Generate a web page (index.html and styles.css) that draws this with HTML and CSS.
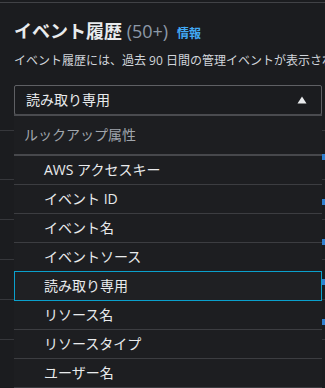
FILE: index.html
```html
<!DOCTYPE html>
<html lang="ja">
<head>
<meta charset="utf-8">
<link rel="stylesheet" href="styles.css">
</head>
<body>
<div class="topline"></div>
<header class="header">
  <h1 class="title">イベント履歴 <span class="count">(50+)</span> <a class="info" href="#">情報</a></h1>
  <p class="desc">イベント履歴には、過去 90 日間の管理イベントが表示されます。</p>
</header>
<div class="filter">
  <div class="select">
    <span class="select-value">読み取り専用</span>
    <svg class="caret" width="10" height="8" viewBox="0 0 10 8"><path d="M5 0.5 L9.5 7.5 L0.5 7.5 Z" fill="#e9ebed"/></svg>
  </div>
  <div class="dropdown">
    <div class="group-label">ルックアップ属性</div>
    <ul class="options">
      <li class="option">AWS アクセスキー</li>
      <li class="option">イベント ID</li>
      <li class="option">イベント名</li>
      <li class="option">イベントソース</li>
      <li class="option selected">読み取り専用</li>
      <li class="option">リソース名</li>
      <li class="option">リソースタイプ</li>
      <li class="option">ユーザー名</li>
    </ul>
  </div>
</div>
<div class="table">
  <div class="row row-head"></div>
  <div class="row row-first"><span class="mark"></span></div>
  <div class="row"><span class="mark"></span></div>
  <div class="row"><span class="mark"></span></div>
  <div class="row"><span class="mark"></span></div>
  <div class="row"><span class="mark"></span></div>
</div>
</body>
</html>
```
FILE: styles.css
```css
html, body {
  margin: 0;
  padding: 0;
  background: #1b1c1f;
}
body {
  width: 325px;
  height: 388px;
  overflow: hidden;
  font-family: "Open Sans", "Noto Sans CJK JP", sans-serif;
  color: #e9ebed;
}
.topline {
  margin-top: 2px;
  height: 1px;
  background: #414246;
}
.header {
  padding: 16px 0 0 14px;
}
.title {
  margin: 0;
  font-size: 18px;
  line-height: 24px;
  font-weight: 700;
  color: #e9ebed;
  white-space: nowrap;
}
.count {
  font-weight: 400;
  color: #8d99a8;
}
.info {
  font-size: 12px;
  font-weight: 700;
  color: #42a9f5;
  text-decoration: none;
  margin-left: 4px;
}
.desc {
  margin: 7px 0 0 0;
  font-size: 12px;
  line-height: 16px;
  color: #d1d5db;
  white-space: nowrap;
  overflow: hidden;
}
.filter {
  position: relative;
  margin: 16px 3px 0 14px;
}
.select {
  height: 28px;
  border: 1px solid #5f6064;
  border-radius: 2px;
  display: flex;
  align-items: center;
  justify-content: space-between;
  padding: 0 14px 0 11px;
  font-size: 14px;
  line-height: 20px;
}
.caret {
  display: block;
}
.dropdown {
  position: absolute;
  top: 29px;
  left: 0;
  right: 0;
  z-index: 2;
  background: #1d1e21;
  border-top: 2px solid #4a4b4f;
  height: 275px;
  overflow: hidden;
}
.group-label {
  height: 38px;
  display: flex;
  align-items: center;
  padding-left: 10px;
  font-size: 14px;
  line-height: 20px;
  color: #a1a6ad;
  border-bottom: 2px solid #47484c;
}
.options {
  list-style: none;
  margin: 0;
  padding: 0;
}
.option {
  height: 28px;
  display: flex;
  align-items: center;
  padding-left: 30px;
  font-size: 14px;
  line-height: 20px;
  color: #e9ebed;
  border-bottom: 1px solid #3c3d41;
}
.option.selected {
  margin-top: -1px;
  height: 28px;
  border: 1px solid #0aa0cc;
  padding-left: 29px;
  background: #1f2023;
}
.row {
  height: 39px;
  border-bottom: 1px solid #36373b;
  display: flex;
  align-items: center;
  justify-content: flex-end;
}
.row-head {
  height: 15px;
}
.row-first {
  height: 48px;
}
.mark {
  width: 3px;
  height: 6px;
  background: #2f7fd0;
  margin-top: 4px;
}
```
